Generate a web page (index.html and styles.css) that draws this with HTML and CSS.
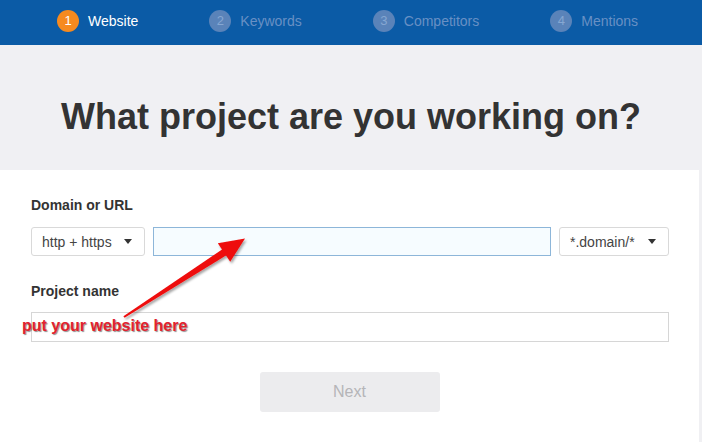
FILE: index.html
```html
<!DOCTYPE html>
<html lang="en">
<head>
<meta charset="UTF-8">
<title>New project</title>
<link rel="stylesheet" href="styles.css">
</head>
<body>

<div class="steps">
  <div class="step active"><span class="num">1</span>Website</div>
  <div class="step"><span class="num">2</span>Keywords</div>
  <div class="step"><span class="num">3</span>Competitors</div>
  <div class="step"><span class="num">4</span>Mentions</div>
</div>

<div class="hero">
  <h1>What project are you working on?</h1>
</div>

<div class="form">
  <label>Domain or URL</label>
  <div class="url-row">
    <div class="select protocol">http + https <span class="caret"></span></div>
    <input type="text" class="url-input">
    <div class="select scope">*.domain/* <span class="caret"></span></div>
  </div>

  <label class="second">Project name</label>
  <input type="text" class="name-input">

  <div class="actions">
    <button disabled>Next</button>
  </div>
</div>

<!-- annotation drawn over the screenshot -->
<svg class="arrow" width="702" height="442" viewBox="0 0 702 442">
  <defs>
    <filter id="shadow" x="-20%" y="-20%" width="140%" height="140%">
      <feDropShadow dx="1.5" dy="2" stdDeviation="1.2" flood-color="#000" flood-opacity="0.35"/>
    </filter>
  </defs>
  <polygon filter="url(#shadow)" fill="#ee1111"
    points="123.4,316.2 222,249.6 217.8,243.2 245,238.5 230.2,261.8 226,255.4 124.6,317.8"/>
</svg>
<div class="note">put your website here</div>

</body>
</html>
```

FILE: styles.css
```css
body {
  margin: 0;
  font-family: 'Liberation Sans', Arial, sans-serif;
  background-color: #f0f0f3;
  color: #333;
  position: relative;
  width: 702px;
  height: 442px;
  overflow: hidden;
}

.steps {
  height: 45px;
  background-color: #0b5ba6;
  display: flex;
  align-items: center;
  gap: 71px;
  padding: 0 0 4px 57px;
  box-sizing: border-box;
}

.step {
  display: flex;
  align-items: center;
  gap: 9px;
  font-size: 14px;
  color: #6890c4;
}

.step .num {
  width: 22px;
  height: 22px;
  border-radius: 50%;
  background-color: #5a83b9;
  color: #86a7d2;
  font-size: 13px;
  display: flex;
  align-items: center;
  justify-content: center;
}

.step.active {
  color: #fff;
}

.step.active .num {
  background-color: #f68a1f;
  color: #fff;
}

.hero {
  height: 125px;
  display: flex;
  align-items: center;
  justify-content: center;
}

h1 {
  margin: 18px 0 0;
  font-size: 36px;
  font-weight: bold;
  color: #333;
}

.form {
  width: 699px;
  height: 272px;
  background-color: #fff;
  padding: 25px 30px 0 31px;
  box-sizing: border-box;
}

label {
  display: block;
  font-size: 14px;
  line-height: 20px;
  font-weight: bold;
  color: #333;
  margin-bottom: 12px;
}

label.second {
  margin-top: 25px;
  margin-bottom: 11px;
}

.url-row {
  display: flex;
  gap: 8px;
}

.select {
  height: 29px;
  box-sizing: border-box;
  border: 1px solid #d9d9d9;
  border-radius: 3px;
  background: #fff;
  font-size: 14px;
  color: #444;
  display: flex;
  align-items: center;
  justify-content: space-between;
  padding: 0 12px 0 10px;
}

.protocol {
  width: 114px;
}

.scope {
  width: 110px;
}

.caret {
  width: 0;
  height: 0;
  border-left: 4px solid transparent;
  border-right: 4px solid transparent;
  border-top: 5px solid #333;
}

input {
  box-sizing: border-box;
  font-family: inherit;
  font-size: 14px;
  border-radius: 0;
  outline: none;
}

.url-input {
  flex: 1;
  height: 29px;
  border: 1px solid #8db6d9;
  background-color: #f6fcff;
}

.name-input {
  display: block;
  width: 638px;
  height: 30px;
  border: 1px solid #d6d6d6;
  background-color: #fff;
}

.actions {
  display: flex;
  justify-content: center;
  margin-top: 30px;
}

button {
  width: 180px;
  height: 40px;
  border: none;
  border-radius: 3px;
  background-color: #ececee;
  color: #b5b5b8;
  font-family: inherit;
  font-size: 16px;
  margin-right: 1px;
}

.arrow {
  position: absolute;
  top: 0;
  left: 0;
  pointer-events: none;
}

.note {
  position: absolute;
  left: 22px;
  top: 317px;
  font-size: 16px;
  font-weight: bold;
  color: #e2222e;
  text-shadow: 1px 1px 1px rgba(0, 0, 0, 0.45);
  pointer-events: none;
}
```
